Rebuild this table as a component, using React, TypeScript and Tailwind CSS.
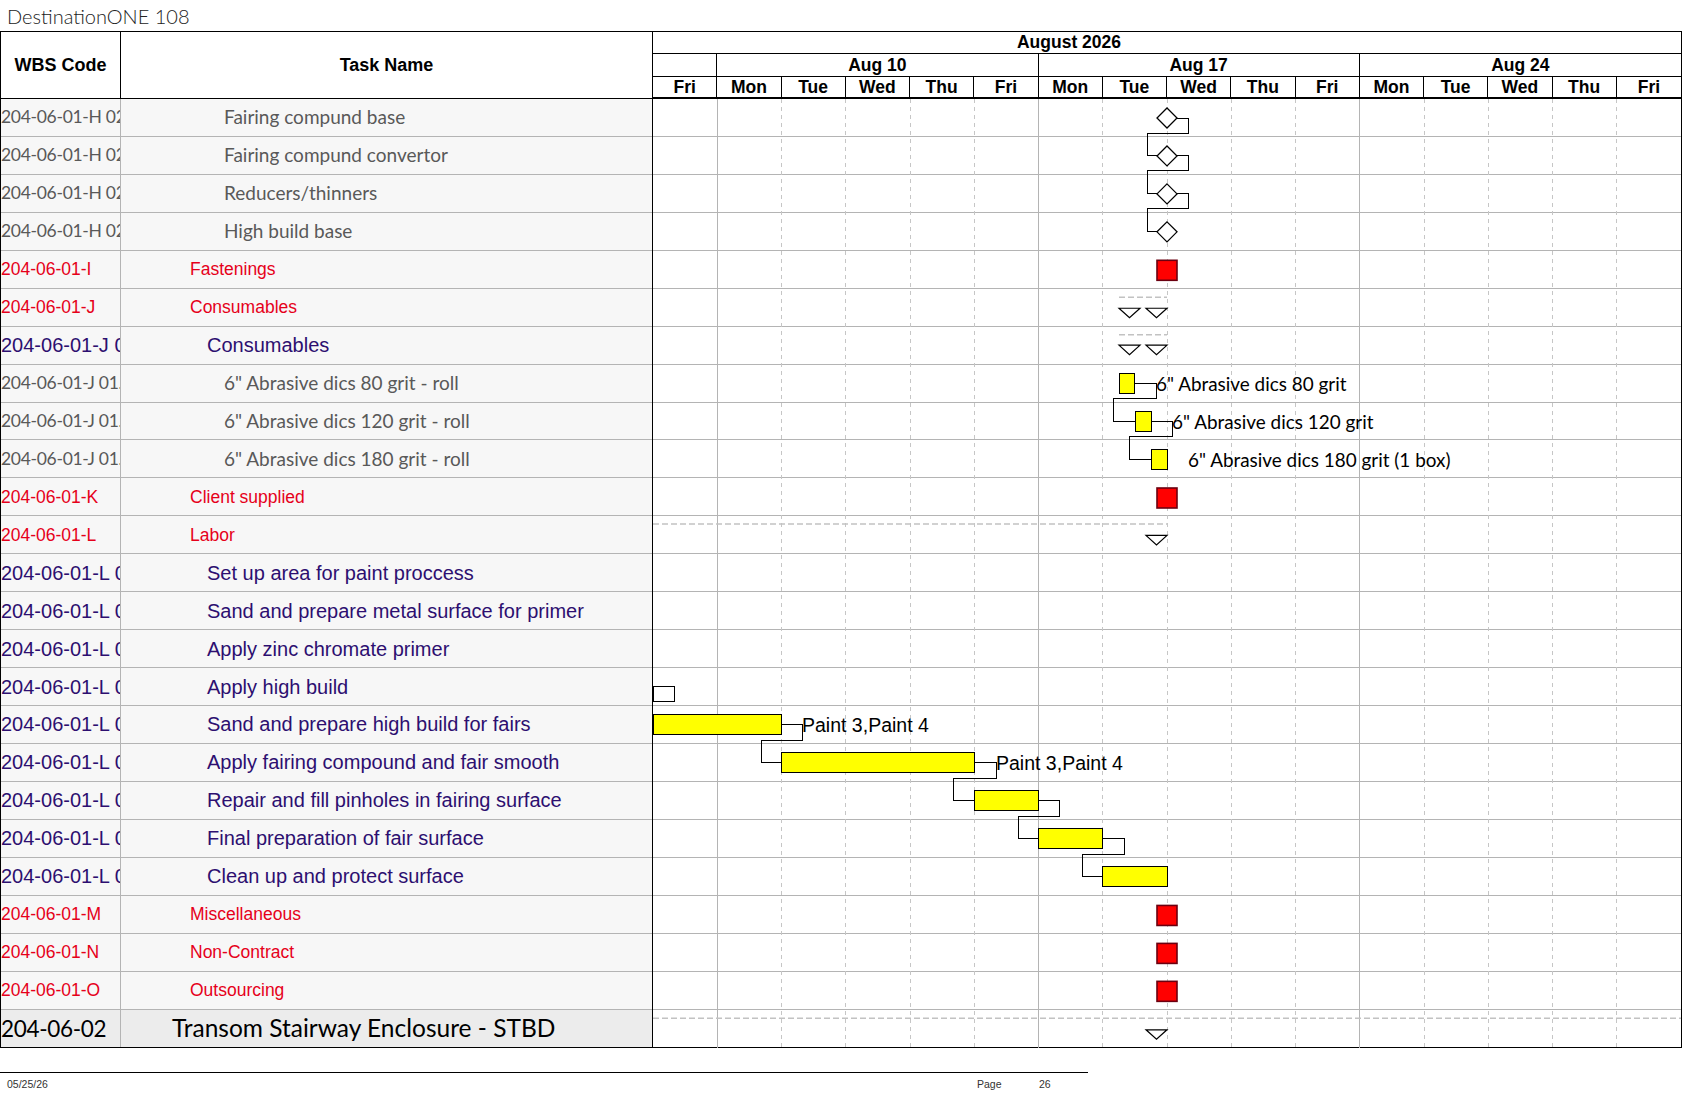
import React from 'react';

type Kind = 'gray' | 'red' | 'blue' | 'big';

const R = 37.95;
const D = 64.25;

const rows: { wbs: string; name: string; kind: Kind }[] = [
  { wbs: '204-06-01-H 02.01', name: 'Fairing compund base', kind: 'gray' },
  { wbs: '204-06-01-H 02.02', name: 'Fairing compund convertor', kind: 'gray' },
  { wbs: '204-06-01-H 02.03', name: 'Reducers/thinners', kind: 'gray' },
  { wbs: '204-06-01-H 02.04', name: 'High build base', kind: 'gray' },
  { wbs: '204-06-01-I', name: 'Fastenings', kind: 'red' },
  { wbs: '204-06-01-J', name: 'Consumables', kind: 'red' },
  { wbs: '204-06-01-J 01', name: 'Consumables', kind: 'blue' },
  { wbs: '204-06-01-J 01.01', name: '6" Abrasive dics 80 grit - roll', kind: 'gray' },
  { wbs: '204-06-01-J 01.02', name: '6" Abrasive dics 120 grit - roll', kind: 'gray' },
  { wbs: '204-06-01-J 01.03', name: '6" Abrasive dics 180 grit - roll', kind: 'gray' },
  { wbs: '204-06-01-K', name: 'Client supplied', kind: 'red' },
  { wbs: '204-06-01-L', name: 'Labor', kind: 'red' },
  { wbs: '204-06-01-L 01', name: 'Set up area for paint proccess', kind: 'blue' },
  { wbs: '204-06-01-L 02', name: 'Sand and prepare metal surface for primer', kind: 'blue' },
  { wbs: '204-06-01-L 03', name: 'Apply zinc chromate primer', kind: 'blue' },
  { wbs: '204-06-01-L 04', name: 'Apply high build', kind: 'blue' },
  { wbs: '204-06-01-L 05', name: 'Sand and prepare high build for fairs', kind: 'blue' },
  { wbs: '204-06-01-L 06', name: 'Apply fairing compound and fair smooth', kind: 'blue' },
  { wbs: '204-06-01-L 07', name: 'Repair and fill pinholes in fairing surface', kind: 'blue' },
  { wbs: '204-06-01-L 08', name: 'Final preparation of fair surface', kind: 'blue' },
  { wbs: '204-06-01-L 09', name: 'Clean up and protect surface', kind: 'blue' },
  { wbs: '204-06-01-M', name: 'Miscellaneous', kind: 'red' },
  { wbs: '204-06-01-N', name: 'Non-Contract', kind: 'red' },
  { wbs: '204-06-01-O', name: 'Outsourcing', kind: 'red' },
  { wbs: '204-06-02', name: 'Transom Stairway Enclosure - STBD', kind: 'big' },
];

const days = ['Fri', 'Mon', 'Tue', 'Wed', 'Thu', 'Fri', 'Mon', 'Tue', 'Wed', 'Thu', 'Fri', 'Mon', 'Tue', 'Wed', 'Thu', 'Fri'];

const wbsStyle: Record<Kind, string> = {
  gray: "font-['Lato',sans-serif] text-[17.5px] tracking-[-0.3px] text-[#595959]",
  red: "font-['Liberation_Sans',Arial,sans-serif] text-[17.5px] text-[#e6001a]",
  blue: "font-['Liberation_Sans',Arial,sans-serif] text-[20px] text-[#2d0f70]",
  big: "font-['Lato',sans-serif] text-[22.5px] tracking-[-0.3px] text-black",
};

const nameStyle: Record<Kind, string> = {
  gray: "pl-[103px] font-['Lato',sans-serif] text-[19px] text-[#595959]",
  red: "pl-[69px] font-['Liberation_Sans',Arial,sans-serif] text-[17.5px] text-[#e6001a]",
  blue: "pl-[86px] font-['Liberation_Sans',Arial,sans-serif] text-[20px] text-[#2d0f70]",
  big: "pl-[51px] font-['Lato',sans-serif] text-[24.5px] text-black",
};

function LeftRow({ wbs, name, kind, last }: { wbs: string; name: string; kind: Kind; last: boolean }) {
  return (
    <div
      className={
        'flex h-[37.95px] ' +
        (last ? 'bg-[#ececec]' : 'bg-[#f7f7f7] border-b border-[#b4b4b4]')
      }
    >
      <div className={'w-[120px] shrink-0 border-r border-[#b4b4b4] flex items-center overflow-hidden whitespace-nowrap ' + wbsStyle[kind]}>
        {wbs}
      </div>
      <div className={'flex-1 flex items-center whitespace-nowrap overflow-hidden ' + nameStyle[kind]}>{name}</div>
    </div>
  );
}

const top = (r: number) => r * R;

function Diamond({ r }: { r: number }) {
  const cy = top(r) + 19;
  return <polygon points={`514,${cy - 10} 524,${cy} 514,${cy + 10} 504,${cy}`} fill="#fff" stroke="#000" strokeWidth={1.3} />;
}

function Tri({ r, x, off }: { r: number; x: number; off: number }) {
  const y = top(r) + off;
  return <polygon points={`${x},${y} ${x + 21},${y} ${x + 10.5},${y + 9.5}`} fill="#fff" stroke="#000" strokeWidth={1.2} />;
}

function RedBox({ r }: { r: number }) {
  return <rect x={504} y={top(r) + 9.5} width={20} height={20} fill="#ff0000" stroke="#6b0010" strokeWidth={1.6} />;
}

function Link({ pts }: { pts: number[][] }) {
  return (
    <polyline
      points={pts.map((p) => p.join(',')).join(' ')}
      fill="none"
      stroke="#000"
      strokeWidth={1}
      shapeRendering="crispEdges"
    />
  );
}

function GanttDrawing() {
  const H = R * 25;
  const bars = [
    { r: 16, x0: 0, x1: 2 * D },
    { r: 17, x0: 2 * D, x1: 5 * D },
    { r: 18, x0: 5 * D, x1: 6 * D },
    { r: 19, x0: 6 * D, x1: 7 * D },
    { r: 20, x0: 7 * D, x1: 8 * D },
  ];
  return (
    <svg className="absolute inset-0" width={1028} height={H} viewBox={`0 0 1028 ${H}`}>
      {Array.from({ length: 15 }, (_, i) => i + 1).map((k) =>
        k === 1 || k === 6 || k === 11 ? (
          <line key={k} x1={k * D} y1={0} x2={k * D} y2={H} stroke="#b4b4b4" strokeWidth={1} shapeRendering="crispEdges" />
        ) : (
          <line key={k} x1={k * D} y1={0} x2={k * D} y2={H} stroke="#c6c6c6" strokeWidth={1} strokeDasharray="4 4" shapeRendering="crispEdges" />
        )
      )}

      {/* milestones */}
      {[0, 1, 2].map((r) => {
        const cy = top(r) + 19;
        return (
          <Link key={r} pts={[[524, cy], [535, cy], [535, cy + 15], [494, cy + 15], [494, cy + R], [504, cy + R]]} />
        );
      })}
      {[0, 1, 2, 3].map((r) => (
        <Diamond key={r} r={r} />
      ))}

      {[4, 10, 21, 22, 23].map((r) => (
        <RedBox key={r} r={r} />
      ))}

      {/* summary rollups */}
      <line x1={466} y1={top(5) + 8.5} x2={514} y2={top(5) + 8.5} stroke="#c2c2c2" strokeWidth={1.5} strokeDasharray="6 3" />
      <line x1={466} y1={top(6) + 8} x2={514} y2={top(6) + 8} stroke="#c2c2c2" strokeWidth={1.5} strokeDasharray="6 3" />
      <line x1={0} y1={top(11) + 7.5} x2={514} y2={top(11) + 7.5} stroke="#c2c2c2" strokeWidth={1.5} strokeDasharray="6 3" />
      <line x1={0} y1={top(24) + 8.5} x2={1028} y2={top(24) + 8.5} stroke="#c2c2c2" strokeWidth={1.5} strokeDasharray="6 3" />
      <Tri r={5} x={466} off={19.5} />
      <Tri r={5} x={493} off={19.5} />
      <Tri r={6} x={466} off={18.5} />
      <Tri r={6} x={493} off={18.5} />
      <Tri r={11} x={493} off={19} />
      <Tri r={24} x={493} off={20} />

      {/* abrasive discs */}
      <Link pts={[[481, top(7) + 19], [503, top(7) + 19], [503, top(7) + 34], [460, top(7) + 34], [460, top(8) + 19], [482, top(8) + 19]]} />
      <Link pts={[[498, top(8) + 19], [519, top(8) + 19], [519, top(8) + 34], [476, top(8) + 34], [476, top(9) + 19], [498, top(9) + 19]]} />
      <rect x={466} y={top(7) + 9} width={15} height={20} fill="#ffff00" stroke="#000" strokeWidth={1} shapeRendering="crispEdges" />
      <rect x={482} y={top(8) + 9} width={16} height={20} fill="#ffff00" stroke="#000" strokeWidth={1} shapeRendering="crispEdges" />
      <rect x={498} y={top(9) + 9} width={16} height={20} fill="#ffff00" stroke="#000" strokeWidth={1} shapeRendering="crispEdges" />
      <text x={503} y={top(7) + 26} fontFamily="Lato, sans-serif" fontSize={18.9} fill="#000">6" Abrasive dics 80 grit</text>
      <text x={519} y={top(8) + 26} fontFamily="Lato, sans-serif" fontSize={18.9} fill="#000">6" Abrasive dics 120 grit</text>
      <text x={535} y={top(9) + 26} fontFamily="Lato, sans-serif" fontSize={18.9} fill="#000">6" Abrasive dics 180 grit (1 box)</text>

      {/* labor tasks */}
      <rect x={0} y={top(15) + 18.5} width={21} height={15} fill="#fff" stroke="#000" strokeWidth={1} shapeRendering="crispEdges" />
      <Link pts={[[2 * D, top(16) + 18.5], [149, top(16) + 18.5], [149, top(16) + 34.5], [108, top(16) + 34.5], [108, top(17) + 18.5], [2 * D, top(17) + 18.5]]} />
      <Link pts={[[5 * D, top(17) + 18.5], [343, top(17) + 18.5], [343, top(17) + 34.5], [300, top(17) + 34.5], [300, top(18) + 18.5], [5 * D, top(18) + 18.5]]} />
      <Link pts={[[6 * D, top(18) + 18.5], [406, top(18) + 18.5], [406, top(18) + 34], [365, top(18) + 34], [365, top(19) + 18.5], [6 * D, top(19) + 18.5]]} />
      <Link pts={[[7 * D, top(19) + 18.5], [471, top(19) + 18.5], [471, top(19) + 34], [429, top(19) + 34], [429, top(20) + 18.5], [7 * D, top(20) + 18.5]]} />
      {bars.map((b) => (
        <rect key={b.r} x={b.x0} y={top(b.r) + 8.5} width={b.x1 - b.x0} height={20} fill="#ffff00" stroke="#000" strokeWidth={1} shapeRendering="crispEdges" />
      ))}
      <text x={149} y={top(16) + 25.5} fontFamily="'Liberation Sans', Arial, sans-serif" fontSize={19.5} fill="#000">Paint 3,Paint 4</text>
      <text x={343} y={top(17) + 25.5} fontFamily="'Liberation Sans', Arial, sans-serif" fontSize={19.5} fill="#000">Paint 3,Paint 4</text>
    </svg>
  );
}

export default function App() {
  return (
    <div className="w-[1687px] h-[1097px] bg-white font-['Liberation_Sans',Arial,sans-serif] text-black overflow-hidden">
      <div className="h-[31px] flex items-center pl-[7px] font-['Lato',sans-serif] font-light text-[20px] text-[#222]">
        DestinationONE 108
      </div>

      <div className="flex w-[1682px] border-t border-b border-black">
        {/* left table */}
        <div className="w-[653px] shrink-0 border-l border-r border-black">
          <div className="flex h-[67px] border-b border-black font-bold text-[18px]">
            <div className="w-[120px] shrink-0 border-r border-black flex items-center justify-center">WBS Code</div>
            <div className="flex-1 flex items-center justify-center">Task Name</div>
          </div>
          {rows.map((row, i) => (
            <LeftRow key={i} {...row} last={i === rows.length - 1} />
          ))}
        </div>

        {/* gantt */}
        <div className="w-[1029px] shrink-0 border-r border-black">
          <div className="h-[22px] border-b border-black flex font-bold text-[17.5px] leading-none">
            <div className="w-[832px] flex items-center justify-center pt-[1px]">August 2026</div>
          </div>
          <div className="h-[23px] border-b border-black grid grid-cols-16 font-bold text-[17.5px] leading-none">
            <div className="col-span-1 border-r border-black"></div>
            <div className="col-span-5 border-r border-black flex items-center justify-center pt-[1px]">Aug 10</div>
            <div className="col-span-5 border-r border-black flex items-center justify-center pt-[1px]">Aug 17</div>
            <div className="col-span-5 flex items-center justify-center pt-[1px]">Aug 24</div>
          </div>
          <div className="h-[22px] border-b-2 border-black grid grid-cols-16 font-bold text-[17.5px] leading-none">
            {days.map((d, i) => (
              <div
                key={i}
                className={'flex items-center justify-center pt-[1px] ' + (i < 15 ? 'border-r border-black' : '')}
              >
                {d}
              </div>
            ))}
          </div>
          <div className="relative">
            {rows.map((_, i) => (
              <div key={i} className={'h-[37.95px] ' + (i < rows.length - 1 ? 'border-b border-[#b4b4b4]' : '')}></div>
            ))}
            <GanttDrawing />
          </div>
        </div>
      </div>

      <div className="mt-[24px] w-[1088px] border-t border-black">
        <div className="flex pt-[6px] text-[10.5px] leading-none text-[#333]">
          <span className="ml-[7px] w-[970px]">05/25/26</span>
          <span className="w-[62px]">Page</span>
          <span>26</span>
        </div>
      </div>
    </div>
  );
}
